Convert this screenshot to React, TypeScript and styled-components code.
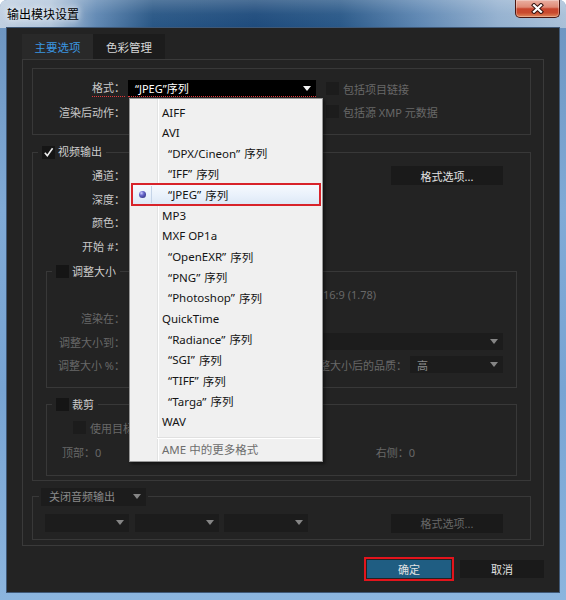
import React from 'react';
import styled, { createGlobalStyle } from 'styled-components';

const GlobalStyle = createGlobalStyle`
  html, body {
    margin: 0;
    padding: 0;
    background: #ffffff;
  }
  body {
    font-family: "Noto Sans", "Noto Sans CJK SC", sans-serif;
    font-size: 11px;
  }
  * {
    box-sizing: border-box;
  }
`;

const Window = styled.div`
  width: 566px;
  height: 600px;
  display: flex;
  flex-direction: column;
  border-radius: 7px 7px 0 0;
  overflow: hidden;
  background: linear-gradient(180deg, #6b93bf 0%, #80aad6 35%, #78a4d3 65%, #8cb5de 100%);
`;

const TitleBar = styled.div`
  height: 28px;
  flex: none;
  display: flex;
  justify-content: space-between;
  align-items: flex-start;
  padding: 0 6px 0 7px;
  background:
    linear-gradient(180deg, rgba(255, 255, 255, 0.2) 0%, rgba(255, 255, 255, 0.04) 50%, rgba(255, 255, 255, 0) 100%),
    linear-gradient(90deg, #bfcfe1 0%, #b1c5db 9%, #6088b3 17%, #285685 27%, #1e4b7c 45%, #295888 60%, #5d86b2 74%, #93b0cf 88%, #a9c0d8 100%);
`;

const TitleText = styled.span`
  font-family: "Noto Sans CJK SC", sans-serif;
  font-size: 12px;
  line-height: 28px;
  color: #000;
  text-shadow: 0 0 6px rgba(255, 255, 255, 0.9), 0 0 10px rgba(255, 255, 255, 0.6);
`;

const CloseButton = styled.div`
  width: 45px;
  height: 18px;
  display: flex;
  align-items: center;
  justify-content: center;
  border: 1px solid #4a1610;
  border-top: none;
  border-radius: 0 0 5px 5px;
  background: linear-gradient(180deg, #eab0a2 0%, #df8a76 42%, #c8462e 52%, #c94a2e 75%, #e0895c 100%);
  box-shadow: inset 0 0 0 1px rgba(255, 255, 255, 0.3);
`;

const Frame = styled.div`
  flex: 1;
  display: flex;
  padding: 0 7px 8px 7px;
`;

const Client = styled.div`
  flex: 1;
  display: flex;
  flex-direction: column;
  padding: 6px 15px 12px 15px;
  background: #232323;
  box-shadow: 0 0 0 1px #3f5876;
`;

const Tabs = styled.div`
  height: 25px;
  flex: none;
  display: flex;
`;

const Tab = styled.div<{ $active?: boolean; $w: number }>`
  width: ${(p) => p.$w}px;
  display: flex;
  align-items: center;
  justify-content: center;
  font-family: "Noto Sans CJK SC", sans-serif;
  font-size: 11.5px;
  color: ${(p) => (p.$active ? '#3a96e0' : '#d6d6d6')};
  background: ${(p) => (p.$active ? '#292929' : '#1c1c1c')};
`;

const Panel = styled.div`
  height: 487px;
  flex: none;
  display: flex;
  flex-direction: column;
  padding: 8px 12px 4px 9px;
  border: 1px solid #3a3a3a;
`;

const FormatGroup = styled.div`
  height: 67px;
  flex: none;
  border: 1px solid #383838;
  display: grid;
  grid-template-columns: 92px 188px 1fr;
  grid-auto-rows: 17px;
  column-gap: 3px;
  row-gap: 6px;
  padding-top: 11px;
`;

const Label = styled.div<{ $dim?: boolean }>`
  display: flex;
  align-items: center;
  justify-content: flex-end;
  white-space: nowrap;
  font-size: 11px;
  color: ${(p) => (p.$dim ? '#686868' : '#c8c8c8')};
`;

const Focus = styled.span`
  display: inline-block;
  height: 17px;
  line-height: 16px;
  border-bottom: 1px dotted #e0383a;
`;

const CheckRow = styled.div<{ $dim?: boolean; $indent?: number }>`
  display: flex;
  align-items: center;
  gap: 4px;
  margin-left: ${(p) => p.$indent ?? 0}px;
  white-space: nowrap;
  font-size: 11px;
  color: ${(p) => (p.$dim ? '#686868' : '#cccccc')};
`;

const Box = styled.span<{ $dim?: boolean }>`
  width: 13px;
  height: 13px;
  flex: none;
  display: inline-flex;
  align-items: center;
  justify-content: center;
  background: ${(p) => (p.$dim ? '#1c1c1c' : '#151515')};
`;

const SelectAnchor = styled.div`
  position: relative;
`;

const Select = styled.div<{ $black?: boolean; $w?: number; $h: number; $pad?: number }>`
  width: ${(p) => (p.$w ? `${p.$w}px` : '100%')};
  height: ${(p) => p.$h}px;
  flex: none;
  display: flex;
  align-items: center;
  justify-content: space-between;
  padding: 0 5px 0 ${(p) => p.$pad ?? 7}px;
  background: ${(p) => (p.$black ? '#000000' : '#1c1c1c')};
  border-bottom: ${(p) => (p.$black ? '1px dotted #e0383a' : 'none')};
  color: ${(p) => (p.$black ? '#ffffff' : '#8a8a8a')};
  font-size: 11px;
  white-space: nowrap;
`;

const Arrow = styled.span<{ $light?: boolean }>`
  width: 0;
  height: 0;
  flex: none;
  border-left: 4.5px solid transparent;
  border-right: 4.5px solid transparent;
  border-top: 5px solid ${(p) => (p.$light ? '#f2f2f2' : '#858585')};
`;

const Menu = styled.div`
  position: absolute;
  top: 18px;
  left: 1px;
  width: 194px;
  z-index: 10;
  padding: 2.7px 2px 1.3px;
  border: 1px solid #979797;
  background:
    linear-gradient(90deg, transparent 27px, #e2e3e3 27px, #e2e3e3 28px, #ffffff 28px, #ffffff 29px, transparent 29px),
    #f0f0f0;
  box-shadow: 2px 2px 3px rgba(0, 0, 0, 0.45);
  font-family: "Noto Sans", "Noto Sans CJK SC", sans-serif;
  font-size: 11.5px;
`;

const Item = styled.div<{ $indent?: boolean; $selected?: boolean; $muted?: boolean }>`
  position: relative;
  height: 20.67px;
  display: flex;
  align-items: center;
  padding-left: ${(p) => (p.$indent ? 36 : 30)}px;
  color: ${(p) => (p.$muted ? '#6d6d6d' : '#141414')};
  white-space: nowrap;
  ${(p) =>
    p.$selected &&
    `
    background: linear-gradient(180deg, #f7fafe 0%, #e9f1fb 55%, #dce7f5 100%);
    outline: 2px solid #d8232a;
    outline-offset: -1px;
  `}
`;

const Quoted = styled.span`
  margin-right: 4px;
`;

const RadioCell = styled.span`
  position: absolute;
  left: 2px;
  top: 2px;
  bottom: 2px;
  width: 18px;
  display: flex;
  align-items: center;
  justify-content: center;
  border-right: 1px solid #c5d4e8;
`;

const Dot = styled.span`
  width: 7px;
  height: 7px;
  border-radius: 50%;
  background: radial-gradient(circle at 35% 30%, #d0d0ff 0%, #6868cc 35%, #22226c 100%);
`;

const Separator = styled.div`
  height: 2px;
  margin: 4.5px 0 0 25px;
  border-top: 1px solid #e0e0e0;
  border-bottom: 1px solid #ffffff;
`;

const Group = styled.fieldset<{ $inset?: boolean; $gap: number }>`
  flex: none;
  min-width: 0;
  margin: ${(p) => `${p.$gap}px ${p.$inset ? 13 : 0}px 0`};
  padding: 0;
  border: 1px solid #383838;
`;

const Legend = styled.legend<{ $h?: number; $ml?: number; $px?: number }>`
  height: ${(p) => p.$h ?? 14}px;
  margin-left: ${(p) => p.$ml ?? 5}px;
  padding: 0 ${(p) => p.$px ?? 4}px;
  display: flex;
  align-items: center;
  gap: 3px;
  line-height: 14px;
  font-size: 11px;
  color: #cecece;
`;

const VideoRows = styled.div`
  display: grid;
  grid-template-columns: 92px 1fr 112px;
  grid-auto-rows: 18px;
  row-gap: 5.67px;
  padding: 7px 27px 0 0;
`;

const RowLabel = styled(Label)`
  grid-column: 1;
`;

const Button = styled.div<{ $w: number; $h: number; $dim?: boolean; $primary?: boolean }>`
  width: ${(p) => p.$w}px;
  height: ${(p) => p.$h}px;
  flex: none;
  display: flex;
  align-items: center;
  justify-content: center;
  font-size: 11px;
  background: ${(p) => (p.$primary ? '#1f5d82' : '#1a1a1a')};
  color: ${(p) => (p.$dim ? '#676767' : '#e2e2e2')};
  ${(p) => p.$primary && 'outline: 2px solid #e3141c; outline-offset: 1px;'}
`;

const VideoFormatButton = styled(Button)`
  grid-column: 3;
  grid-row: 1;
  align-self: start;
`;

const ResizeRows = styled.div`
  display: grid;
  grid-template-columns: 78px 198px 180px;
  grid-auto-rows: 18px;
  row-gap: 5.33px;
  padding: 7px 0 13px;
`;

const ResizeValue = styled.div`
  grid-column: 3;
  display: flex;
  align-items: center;
  color: #686868;
  font-size: 11px;
`;

const QualityCell = styled.div`
  grid-column: 2 / span 2;
  display: flex;
  align-items: center;
  justify-content: flex-end;
  gap: 3px;
  color: #686868;
  white-space: nowrap;
`;

const CropBody = styled.div`
  display: flex;
  flex-direction: column;
  gap: 7px;
  padding: 8px 0 14px;
`;

const CropSides = styled.div`
  height: 18px;
  display: flex;
  align-items: center;
  justify-content: space-between;
  padding: 0 101px 0 15px;
  color: #686868;
  white-space: nowrap;
`;

const VideoBottom = styled.div`
  height: 4px;
`;

const AudioRow = styled.div`
  display: flex;
  align-items: flex-start;
  gap: 5.5px;
  padding: 8px 27px 6px 12px;
`;

const PushRight = styled.div`
  margin-left: auto;
`;

const Actions = styled.div`
  height: 22px;
  margin-top: 12px;
  display: flex;
  justify-content: flex-end;
  align-items: center;
  gap: 9px;
`;

const FORMATS: { name: string; seq?: boolean }[] = [
  { name: 'AIFF' },
  { name: 'AVI' },
  { name: 'DPX/Cineon', seq: true },
  { name: 'IFF', seq: true },
  { name: 'JPEG', seq: true },
  { name: 'MP3' },
  { name: 'MXF OP1a' },
  { name: 'OpenEXR', seq: true },
  { name: 'PNG', seq: true },
  { name: 'Photoshop', seq: true },
  { name: 'QuickTime' },
  { name: 'Radiance', seq: true },
  { name: 'SGI', seq: true },
  { name: 'TIFF', seq: true },
  { name: 'Targa', seq: true },
  { name: 'WAV' },
];

const Checkbox = ({ checked, dim }: { checked?: boolean; dim?: boolean }) => (
  <Box $dim={dim}>
    {checked && (
      <svg width="11" height="11" viewBox="0 0 11 11">
        <path d="M1.8 5.8 L4.3 8.6 L9.6 1.2" stroke="#ececec" strokeWidth="1.6" fill="none" />
      </svg>
    )}
  </Box>
);

const FormatMenu = () => (
  <Menu>
    {FORMATS.map((f) => (
      <Item key={f.name} $indent={f.seq} $selected={f.name === 'JPEG'}>
        {f.name === 'JPEG' && (
          <RadioCell>
            <Dot />
          </RadioCell>
        )}
        {f.seq ? (
          <>
            <Quoted>“{f.name}”</Quoted>序列
          </>
        ) : (
          f.name
        )}
      </Item>
    ))}
    <Separator />
    <Item $muted>AME 中的更多格式</Item>
  </Menu>
);

export default function App() {
  return (
    <>
      <GlobalStyle />
      <Window>
        <TitleBar>
          <TitleText>输出模块设置</TitleText>
          <CloseButton>
            <svg width="13" height="11" viewBox="0 0 13 11">
              <path d="M3 2.2 L10 8.8 M10 2.2 L3 8.8" stroke="#3a1712" strokeWidth="4.2" strokeLinecap="square" />
              <path d="M3 2.2 L10 8.8 M10 2.2 L3 8.8" stroke="#ffffff" strokeWidth="2.2" strokeLinecap="square" />
            </svg>
          </CloseButton>
        </TitleBar>
        <Frame>
          <Client>
            <Tabs>
              <Tab $active $w={71}>主要选项</Tab>
              <Tab $w={72}>色彩管理</Tab>
            </Tabs>
            <Panel>
              <FormatGroup>
                <Label>
                  <Focus>格式：</Focus>
                </Label>
                <SelectAnchor>
                  <Select $black $h={17}>
                    <span>“JPEG”序列</span>
                    <Arrow $light />
                  </Select>
                  <FormatMenu />
                </SelectAnchor>
                <CheckRow $dim $indent={7}>
                  <Checkbox dim />
                  包括项目链接
                </CheckRow>
                <Label>渲染后动作：</Label>
                <div />
                <CheckRow $dim $indent={7}>
                  <Checkbox dim />
                  包括源 XMP 元数据
                </CheckRow>
              </FormatGroup>

              <Group $gap={10}>
                <Legend>
                  <Checkbox checked />
                  视频输出
                </Legend>
                <VideoRows>
                  <VideoFormatButton $w={112} $h={19}>
                    格式选项...
                  </VideoFormatButton>
                  <RowLabel>通道：</RowLabel>
                  <RowLabel>深度：</RowLabel>
                  <RowLabel>颜色：</RowLabel>
                  <RowLabel>开始 #：</RowLabel>
                </VideoRows>

                <Group $inset $gap={10}>
                  <Legend>
                    <Checkbox />
                    调整大小
                  </Legend>
                  <ResizeRows>
                    <ResizeValue>16:9 (1.78)</ResizeValue>
                    <RowLabel $dim>渲染在：</RowLabel>
                    <RowLabel $dim>调整大小到：</RowLabel>
                    <ResizeValue>
                      <Select $h={17}>
                        <span />
                        <Arrow />
                      </Select>
                    </ResizeValue>
                    <RowLabel $dim>调整大小 %：</RowLabel>
                    <QualityCell>
                      调整大小后的品质：
                      <Select $w={93} $h={17}>
                        <span>高</span>
                        <Arrow />
                      </Select>
                    </QualityCell>
                  </ResizeRows>
                </Group>

                <Group $inset $gap={10}>
                  <Legend>
                    <Checkbox />
                    裁剪
                  </Legend>
                  <CropBody>
                    <CheckRow $dim $indent={26}>
                      <Checkbox dim />
                      使用目标区域
                    </CheckRow>
                    <CropSides>
                      <span>顶部：0</span>
                      <span>右侧：0</span>
                    </CropSides>
                  </CropBody>
                </Group>
                <VideoBottom />
              </Group>

              <Group $gap={7}>
                <Legend $h={18} $ml={6} $px={2}>
                  <Select $w={105} $h={18} $pad={8}>
                    <span>关闭音频输出</span>
                    <Arrow />
                  </Select>
                </Legend>
                <AudioRow>
                  <Select $w={84} $h={18}>
                    <span />
                    <Arrow />
                  </Select>
                  <Select $w={84} $h={18}>
                    <span />
                    <Arrow />
                  </Select>
                  <Select $w={84} $h={18}>
                    <span />
                    <Arrow />
                  </Select>
                  <PushRight>
                    <Button $w={112} $h={19} $dim>
                      格式选项...
                    </Button>
                  </PushRight>
                </AudioRow>
              </Group>
            </Panel>
            <Actions>
              <Button $primary $w={84} $h={18}>
                确定
              </Button>
              <Button $w={84} $h={18}>
                取消
              </Button>
            </Actions>
          </Client>
        </Frame>
      </Window>
    </>
  );
}
